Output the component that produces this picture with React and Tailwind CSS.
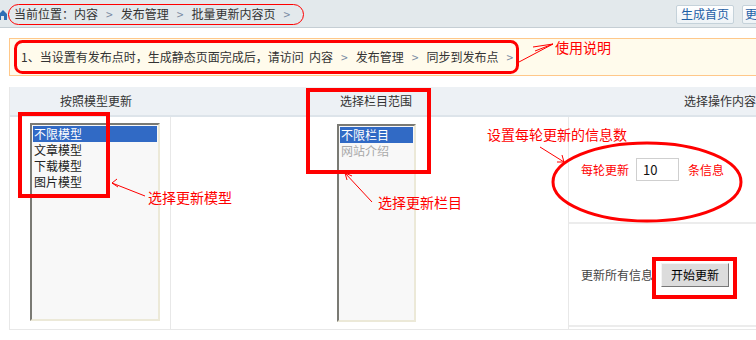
import React from "react";

const font = { fontFamily: '"Noto Sans CJK SC", "Liberation Sans", sans-serif' };

function Sep() {
  return <span className="mx-[8px] text-[#7a8ba3]">&gt;</span>;
}

function ListBox({ items, className }) {
  return (
    <div
      className={`border-t-2 border-l-2 border-t-[#7a7a74] border-l-[#7a7a74] border-r-2 border-b-2 border-r-[#ece9d8] border-b-[#ece9d8] bg-[#f8f8f8] p-[1px] ${className}`}
    >
      {items.map((it, i) => (
        <div
          key={it.label}
          className={`h-[16px] px-[1px] text-[12px] leading-[16px] ${
            i === 0 ? "bg-[#316ac5] text-white" : it.muted ? "text-[#a9a9a9]" : "text-[#222]"
          }`}
        >
          {it.label}
        </div>
      ))}
    </div>
  );
}

function Annotations() {
  return (
    <svg className="pointer-events-none absolute left-0 top-0" width="756" height="340">
      <g fill="none" stroke="#ff0000">
        <rect x="8.5" y="4.5" width="295" height="20" rx="10" strokeWidth="1" />
        <rect x="15.5" y="41.5" width="502" height="31" rx="7" strokeWidth="3" />
        <line x1="519" y1="62" x2="553" y2="44" strokeWidth="1" />
        <line x1="533" y1="47" x2="553" y2="44" strokeWidth="1" />
        <line x1="535" y1="51" x2="553" y2="44" strokeWidth="1" />
        <rect x="20" y="114" width="88" height="82" strokeWidth="4" />
        <line x1="112" y1="183" x2="145" y2="196" strokeWidth="1" />
        <line x1="112" y1="183" x2="117" y2="179" strokeWidth="1" />
        <line x1="112" y1="183" x2="118" y2="187" strokeWidth="1" />
        <rect x="308" y="90" width="121" height="82" strokeWidth="4" />
        <line x1="345" y1="173" x2="372" y2="202" strokeWidth="1" />
        <line x1="345" y1="173" x2="347" y2="180" strokeWidth="1" />
        <line x1="345" y1="173" x2="352" y2="176" strokeWidth="1" />
        <line x1="540" y1="147" x2="564" y2="162" strokeWidth="1" />
        <line x1="564" y1="162" x2="562" y2="155" strokeWidth="1" />
        <line x1="564" y1="162" x2="557" y2="162" strokeWidth="1" />
        <ellipse cx="647" cy="182" rx="94" ry="39" strokeWidth="3" />
        <rect x="654" y="259" width="81" height="38" strokeWidth="4" />
      </g>
    </svg>
  );
}

export default function App() {
  return (
    <div className="relative h-[340px] w-[756px] overflow-hidden bg-white text-[12px] text-[#333]" style={font}>
      <div className="flex h-[28px] w-[782px] items-center justify-between border-b border-[#c5ced4] bg-[#e3e9ec]">
        <div className="flex items-center">
          <svg width="7" height="12" viewBox="0 0 7 12" className="mr-[7px]">
            <path d="M0 5 L3 2 L7 6 V12 H4 V8 H1 V12 H0 Z" fill="#2e6fb5" />
          </svg>
          <span>当前位置：内容</span>
          <Sep />
          <span>发布管理</span>
          <Sep />
          <span>批量更新内容页</span>
          <Sep />
        </div>
        <div className="flex items-center gap-[8px] pt-[1px]">
          <button className="h-[19px] w-[58px] rounded-[2px] border border-[#c5d2da] bg-gradient-to-b from-white to-[#eef3f6] text-[12px] leading-[16px] text-[#1f5fa6]">
            生成首页
          </button>
          <button className="h-[19px] w-[40px] rounded-[2px] border border-[#c5d2da] bg-gradient-to-b from-white to-[#eef3f6] pl-[2px] text-left text-[12px] leading-[16px] text-[#1f5fa6]">
            更新
          </button>
        </div>
      </div>

      <div className="ml-[9px] mt-[10px] flex h-[38px] items-center whitespace-nowrap border border-r-0 border-[#ffc88a] bg-[#fffbec] pl-[11px]">
        <span>1、当设置有发布点时，生成静态页面完成后，请访问&nbsp; 内容</span>
        <Sep />
        <span>发布管理</span>
        <Sep />
        <span>同步到发布点</span>
        <Sep />
        <span className="mb-[20px] ml-[34px] text-[14px] text-[#ff0000]">使用说明</span>
      </div>

      <div className="ml-[9px] mt-[11px] w-[900px] border-b border-l border-[#e8e8e8]">
        <div className="flex h-[30px] items-center border-b-2 border-[#dde4ea] bg-[#edf1f5] text-[12px]">
          <div className="w-[172px] text-center">按照模型更新</div>
          <div className="w-[388px] text-center">选择栏目范围</div>
          <div className="w-[300px] text-center">选择操作内容</div>
        </div>
        <div className="flex h-[212px]">
          <div className="relative w-[161px] border-r border-[#e8e8e8] pl-[20px] pt-[6px]">
            <ListBox
              className="h-[198px] w-[130px]"
              items={[{ label: "不限模型" }, { label: "文章模型" }, { label: "下载模型" }, { label: "图片模型" }]}
            />
          </div>
          <div className="relative w-[398px] whitespace-nowrap border-r border-[#e8e8e8] pt-[7px]">
            <ListBox
              className="ml-[166px] h-[198px] w-[79px]"
              items={[{ label: "不限栏目" }, { label: "网站介绍", muted: true }]}
            />
            <span className="absolute left-[-23px] top-[70px] text-[14px] text-[#ff0000]">选择更新模型</span>
            <span className="absolute left-[207px] top-[75px] text-[14px] text-[#ff0000]">选择更新栏目</span>
            <span className="absolute left-[316px] top-[7px] text-[14px] text-[#ff0000]">设置每轮更新的信息数</span>
          </div>
          <div className="flex w-[300px] flex-col">
            <div className="flex h-[107px] items-center border-b-2 border-[#ececec] pl-[12px] text-[#ff0000]">
              <span>每轮更新</span>
              <input
                readOnly
                value="10"
                className="ml-[7px] h-[23px] w-[43px] border border-[#cfcfcf] bg-white pl-[6px] text-[13px] text-[#111] outline-none"
              />
              <span className="ml-[9px]">条信息</span>
            </div>
            <div className="flex h-[103px] items-center border-b-2 border-[#ececec] pl-[12px] pt-[1px]">
              <span className="text-[#444]">更新所有信息</span>
              <button className="ml-[8px] h-[24px] w-[68px] border border-b-[#777] border-l-[#f4f4f4] border-r-[#777] border-t-[#f4f4f4] bg-[#dcdcdc] text-[12px] text-black">
                开始更新
              </button>
            </div>
          </div>
        </div>
      </div>

      <Annotations />
    </div>
  );
}
